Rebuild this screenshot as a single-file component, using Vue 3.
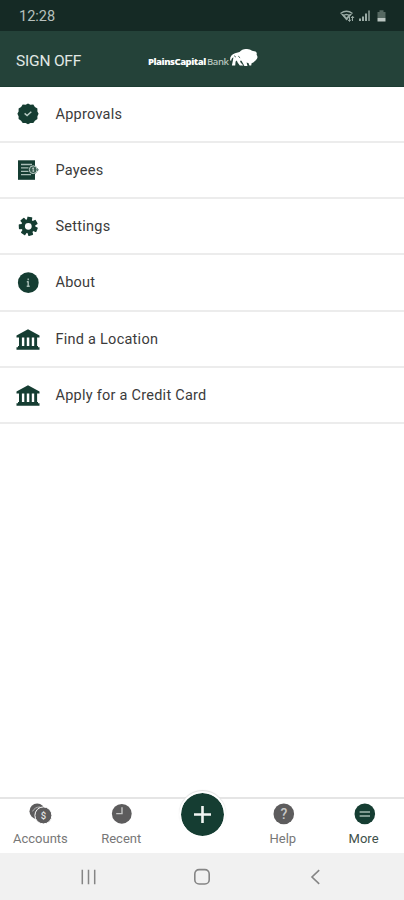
<template>
  <div class="screen">
    <!-- status bar -->
    <div class="status-bar">
      <span class="time">12:28</span>
      <svg class="status-icons" width="50" height="16" viewBox="0 0 50 16">
        <g fill="none" stroke="#9aaba5" stroke-width="1.5">
          <path d="M1.5 4.5Q7.5 0.2 13.5 4.5M4 7Q7.5 4.2 11 7" />
        </g>
        <path d="M2 5L7.5 11.5L13 5L10.8 5L7.5 8.5L4.2 5Z" fill="#9aaba5" />
        <path d="M10.5 8v4M8.8 10.5l1.7 2l1.5-2M13.5 12V7.5M12.2 9l1.4-1.8L15 9" fill="none" stroke="#9aaba5" />
        <path d="M20 12V9.5h2V12zM23 12V7.5h2V12zM26 12V4.5h2V12z" fill="#9aaba5" />
        <path d="M29 12V1.5h2V12z" fill="#71837d" />
        <path d="M38.5 3h2V1.3h4V3h2v6h-8z" fill="#566962" />
        <path d="M38.5 9h8v3.5h-8z" fill="#bac5c1" />
      </svg>
    </div>

    <!-- header -->
    <header class="header">
      <span class="sign-off">SIGN OFF</span>
      <div class="logo">
        <div class="wordmark"><span class="plains">PlainsCapital</span><span class="bank">Bank</span></div>
        <svg class="bison" width="30" height="20" viewBox="0 0 30 20">
          <path
            fill="#fff"
            d="M1.2 12.4C.6 9 2.6 6.4 6 5.2L10.5 4C12.5 1.7 15 .6 18 1C20 1 21.5 1.8 23 2.8L26.5 3.4C27.8 4.1 28 5.2 27.6 6.7C29 8.5 28.7 10.5 27 12L24.3 14.6L22.6 15.2L22.2 17.6L20.4 17.6L19.6 15.2L17.6 14.5L18.5 18L15.4 18L12.5 12.8L11 12.8L11.6 14.5L14.4 17.6H10.8L8.6 14.4L7.8 12.4L6.6 13.6L6.2 17.6H2.9L3.9 12.4L4.4 9.6C3.2 9.9 2.4 11 2.2 12.7Z"
          />
          <path d="M5.2 7.8l1.6 1.2M9.3 8.2l1.8 1.6" stroke="#244239" stroke-width=".9" />
        </svg>
      </div>
    </header>

    <!-- menu -->
    <ul class="menu">
      <li v-for="item in menuItems" :key="item.label" class="menu-item">
        <svg class="menu-icon" width="24" height="24" viewBox="0 0 24 24">
          <template v-if="item.icon === 'approve'">
            <path
              fill="#153d32"
              d="M12 1.5l2.4 1.3 2.9-.2 1.6 2.4 2.5 1.6v2.9l1.2 2.3-1.2 2.4v2.9l-2.5 1.6-1.6 2.3-2.9-.1-2.4 1.3-2.4-1.3-2.9.1-1.6-2.3-2.5-1.6v-2.9l-1.2-2.4 1.2-2.3V6.6L5.1 5l1.6-2.4 2.9.2z"
            />
            <path d="M8.6 11.4l2.5 2.1 4.2-3.8" fill="none" stroke="#b8cbc4" stroke-width="1.4" />
          </template>
          <template v-else-if="item.icon === 'payee'">
            <path d="M2 2.3h17V21.8H2z" fill="#153d32" />
            <path d="M5 6.5h11M5 9.9h7.5M5 13.3h7.5M5 16.7h10" stroke="#a9bdb6" stroke-width="1.3" />
            <path d="M18.5 7l4.2 4.7l-4.2 4.7z" fill="#153d32" />
            <circle cx="17.2" cy="11.7" r="3.9" fill="#375c50" stroke="#c0d0ca" />
            <path d="M17.2 9.4v4.6M16.2 10.4h1.6M16.6 13h1.6" stroke="#d0dcd8" stroke-width=".8" />
          </template>
          <template v-else-if="item.icon === 'settings'">
            <g transform="rotate(10 12.3 12.3)" fill="#153d32">
              <rect
                v-for="n in 7"
                :key="n"
                x="9.8"
                y="2.8"
                width="5"
                height="5"
                rx=".7"
                :transform="`rotate(${(n * 360) / 7} 12.3 12.3)`"
              />
            </g>
            <circle cx="12.3" cy="12.3" r="5.2" fill="#fff" stroke="#153d32" stroke-width="3.6" />
          </template>
          <template v-else-if="item.icon === 'info'">
            <circle cx="12.3" cy="12.7" r="10.4" fill="#153d32" />
            <path d="M12.2 8.5v1.7M12.2 11.3v5M10.8 11.7h1.5M10.7 16.2h3" stroke="#a9bdb6" stroke-width="1.4" />
          </template>
          <template v-else>
            <path
              fill="#153d32"
              d="M12 2.3L23.5 8.4v2.2H.5V8.4zM3 10.4h2.9v9H3zM8.3 10.4h2.5v9H8.3zM13.3 10.4h2.5v9h-2.5zM18.2 10.4h2.9v9h-2.9zM2 19.1h20v1.2h1.5v2.5H.5v-2.5H2z"
            />
          </template>
        </svg>
        <span class="menu-label">{{ item.label }}</span>
      </li>
    </ul>

    <!-- bottom tabs -->
    <nav class="tabs">
      <div v-for="tab in tabs" :key="tab.icon" class="tab" :class="{ active: tab.active }">
        <div v-if="tab.icon === 'add'" class="add-button">
          <svg width="43" height="43" viewBox="0 0 43 43">
            <path d="M21.5 13v17M13 21.5h17" stroke="#f1f5f3" stroke-width="2.6" />
          </svg>
        </div>
        <template v-else>
          <svg width="24" height="24" viewBox="0 0 24 24">
            <template v-if="tab.icon === 'accounts'">
              <circle cx="9.2" cy="9.2" r="7.7" fill="#5d5c5d" />
              <path d="M4.5 9.4C6 6.6 8.6 4.8 12 5" fill="none" stroke="#b8b8b8" />
              <circle cx="15.4" cy="13.4" r="8.5" fill="#5d5c5d" stroke="#fff" />
              <text x="15.4" y="16.9" text-anchor="middle" font-size="9.5" font-weight="500" fill="#e4e4e4">$</text>
            </template>
            <template v-else-if="tab.icon === 'recent'">
              <circle cx="12.8" cy="11.8" r="9.9" fill="#5d5c5d" />
              <path d="M13 5.2v6.4H7.2" fill="none" stroke="#c5c5c5" stroke-width="1.4" />
            </template>
            <template v-else-if="tab.icon === 'help'">
              <circle cx="12.8" cy="11.9" r="10.3" fill="#5d5c5d" />
              <text x="12.8" y="16.8" text-anchor="middle" font-size="14" font-weight="500" fill="#c8c8c8">?</text>
            </template>
            <template v-else>
              <circle cx="12.8" cy="11.9" r="10.3" fill="#153d32" />
              <path d="M7.6 10h10.4M7.6 14h10.4" stroke="#a3b9b0" stroke-width="1.5" />
            </template>
          </svg>
          <span class="tab-label">{{ tab.label }}</span>
        </template>
      </div>
    </nav>

    <!-- system navigation -->
    <div class="system-nav">
      <svg width="20" height="20" viewBox="0 0 20 20">
        <path d="M4.3 2.8v14.4M10.5 2.8v14.4M16.7 2.8v14.4" stroke="#858585" stroke-width="1.5" />
      </svg>
      <svg width="20" height="20" viewBox="0 0 20 20">
        <rect x="2.8" y="2.6" width="14.4" height="14.4" rx="4.3" fill="none" stroke="#858585" stroke-width="1.6" />
      </svg>
      <svg width="20" height="20" viewBox="0 0 20 20">
        <path d="M13.2 3.2L6 10l7.2 6.8" fill="none" stroke="#858585" stroke-width="1.6" />
      </svg>
    </div>
  </div>
</template>

<script setup>
const menuItems = [
  { label: 'Approvals', icon: 'approve' },
  { label: 'Payees', icon: 'payee' },
  { label: 'Settings', icon: 'settings' },
  { label: 'About', icon: 'info' },
  { label: 'Find a Location', icon: 'bank' },
  { label: 'Apply for a Credit Card', icon: 'bank' },
]

const tabs = [
  { label: 'Accounts', icon: 'accounts' },
  { label: 'Recent', icon: 'recent' },
  { label: '', icon: 'add' },
  { label: 'Help', icon: 'help' },
  { label: 'More', icon: 'more', active: true },
]
</script>

<style>
body {
  margin: 0;
}
</style>

<style scoped>
.screen {
  display: flex;
  flex-direction: column;
  width: 404px;
  height: 900px;
  overflow: hidden;
  background: #fff;
  font-family: Roboto, sans-serif;
}

.status-bar {
  display: flex;
  flex: none;
  align-items: center;
  justify-content: space-between;
  box-sizing: border-box;
  height: 31px;
  padding: 2px 15px 0 19px;
  background: #152a25;
}

.time {
  color: #b7c0bd;
  font-size: 14.5px;
}

.header {
  display: flex;
  flex: none;
  align-items: center;
  box-sizing: border-box;
  height: 55.5px;
  padding: 6px 16px 0;
  background: #244239;
  border-bottom: 1px solid #1c3c32;
}

.sign-off {
  width: 132px;
  color: #e1e8e5;
  font-size: 15.5px;
  letter-spacing: -0.2px;
}

.logo {
  display: flex;
  align-items: center;
  height: 30px;
}

.wordmark {
  display: flex;
  width: 81px;
  margin-top: 2px;
  font-family: 'Open Sans', sans-serif;
  font-size: 9.5px;
  line-height: 14px;
  white-space: nowrap;
}

.plains {
  width: 59px;
  color: #fff;
  font-weight: 800;
  letter-spacing: -0.48px;
}

.bank {
  color: #b5c3be;
  font-weight: 600;
  letter-spacing: -0.4px;
}

.bison {
  margin-top: -7px;
}

.menu {
  flex: 1;
  margin: 0;
  padding: 0;
  list-style: none;
}

.menu-item {
  display: flex;
  align-items: center;
  box-sizing: border-box;
  height: 56.25px;
  padding-left: 16px;
  border-bottom: 2px solid #ececec;
}

.menu-icon {
  margin-right: 15.5px;
}

.menu-label {
  padding-top: 1px;
  color: #3b3b3b;
  font-size: 14.5px;
  letter-spacing: 0.25px;
}

.tabs {
  display: flex;
  flex: none;
  box-sizing: border-box;
  height: 56px;
  border-top: 2px solid #e5e5e5;
}

.tab {
  display: flex;
  flex: 1;
  flex-direction: column;
  align-items: center;
  padding-top: 3px;
  color: #777;
}

.tab.active {
  color: #41504b;
}

.tab-label {
  margin-top: 5px;
  font-size: 13px;
  line-height: 16px;
  letter-spacing: 0;
}

.add-button {
  width: 43px;
  height: 43px;
  margin: -11px 0 0 1px;
  border: 2px solid #fff;
  border-radius: 50%;
  background: #153d32;
  background-clip: padding-box;
  box-shadow: 0 -1px 1px #e1e1e1;
}

.system-nav {
  display: flex;
  flex: none;
  align-items: center;
  justify-content: space-between;
  box-sizing: border-box;
  height: 47px;
  padding: 0 78px;
  background: #f1f1f1;
}
</style>
